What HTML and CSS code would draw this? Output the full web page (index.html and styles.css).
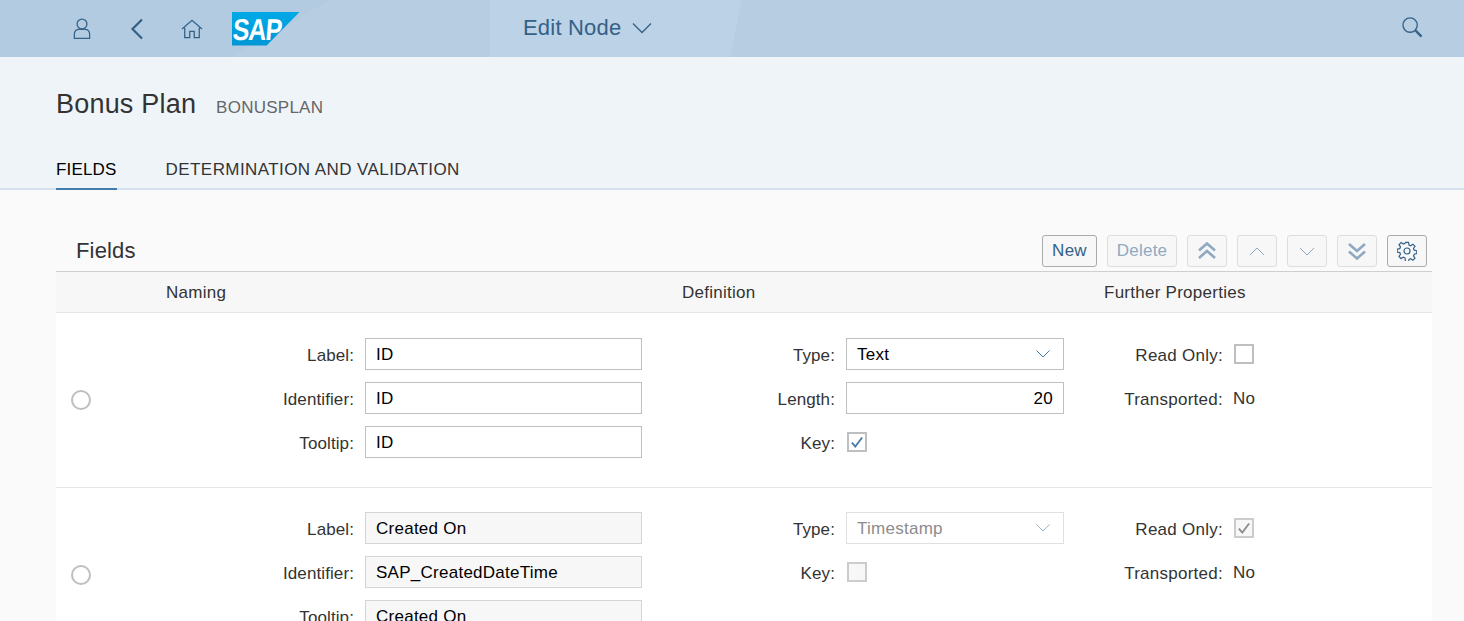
FILE: index.html
```html
<!DOCTYPE html>
<html lang="en">
<head>
<meta charset="UTF-8">
<title>Edit Node</title>
<link rel="stylesheet" href="styles.css">
</head>

<body>
    <header class="shell-bar">
        <div class="shell-left">
            <svg class="shell-icon" viewBox="0 0 20 24"><circle cx="10" cy="6.500" r="5.500"/><path d="M1.500 22.500v-4.500c0-3.500 2.500-5.500 5.500-5.500h6c3 0 5.500 2 5.500 5.500v4.500z"/></svg>
            <svg class="shell-icon back" viewBox="0 0 14 22"><path d="M12 1.500 2.500 11 12 20.500"/></svg>
            <svg class="shell-icon home" viewBox="0 0 24 22"><path d="M1 11 12 1.500 23 11M4 9.500v11h5.500v-7h5v7H20v-11"/></svg>
            <div class="logo"><span>SAP</span></div>
        </div>
        <div class="shell-title">
            <span>Edit Node</span>
            <svg class="title-arrow" viewBox="0 0 20 12"><path d="M1 1.500 10 10.500 19 1.500"/></svg>
        </div>
        <svg class="shell-icon search" viewBox="0 0 22 22"><circle cx="8.500" cy="8.500" r="7.500"/><path class="handle" d="M14 14l6.500 6.500"/></svg>
    </header>

    <section class="page-head">
        <div class="page-title">
            <h1>Bonus Plan</h1>
            <span class="page-id">BONUSPLAN</span>
        </div>
        <nav class="tabs">
            <a class="tab active">FIELDS</a>
            <a class="tab">DETERMINATION AND VALIDATION</a>
        </nav>
    </section>

    <main class="content">
        <div class="toolbar">
            <h2>Fields</h2>
            <div class="actions">
                <button class="btn new">New</button>
                <button class="btn off delete">Delete</button>
                <button class="btn off icon"><svg class="double" viewBox="0 0 20 18"><path d="M2 8.500 10 1.500 18 8.500M2 16 10 9 18 16"/></svg></button>
                <button class="btn off icon"><svg class="single" viewBox="0 0 16 9"><path d="M1 8 8 1 15 8"/></svg></button>
                <button class="btn off icon"><svg class="single" viewBox="0 0 16 9"><path d="M1 1 8 8 15 1"/></svg></button>
                <button class="btn off icon"><svg class="double" viewBox="0 0 20 18"><path d="M2 2 10 9 18 2M2 9.500 10 16.500 18 9.500"/></svg></button>
                <button class="btn icon"><svg class="gear" viewBox="0 0 20 20"><circle cx="10" cy="10" r="3"/><path d="M8.500 1h3l.5 2.600 1.700.7 2.200-1.500 2.100 2.100-1.500 2.200.7 1.700 2.600.5v3l-2.600.5-.7 1.700 1.500 2.200-2.100 2.100-2.200-1.500-1.700.7-.5 2.600h-3L8 16.400l-1.700-.7-2.200 1.500L2 15.100l1.500-2.200-.7-1.700L.2 10.700v-3l2.600-.5.700-1.700L2 3.300 4.100 1.200l2.200 1.500L8 2z" transform="translate(0 .4)"/></svg></button>
            </div>
        </div>

        <div class="table">
            <div class="row head">
                <span></span>
                <span>Naming</span>
                <span>Definition</span>
                <span>Further Properties</span>
            </div>

            <div class="row item first">
                <div class="select-cell"><span class="radio"></span></div>
                <div class="col naming">
                    <label class="field"><span>Label:</span><div class="input">ID</div></label>
                    <label class="field"><span>Identifier:</span><div class="input">ID</div></label>
                    <label class="field"><span>Tooltip:</span><div class="input">ID</div></label>
                </div>
                <div class="col definition">
                    <label class="field"><span>Type:</span><div class="input drop">Text<svg viewBox="0 0 14 8"><path d="M.5.500 7 7 13.500.500"/></svg></div></label>
                    <label class="field"><span>Length:</span><div class="input num">20</div></label>
                    <label class="field"><span>Key:</span><div class="check key"><svg viewBox="0 0 14 14"><path d="M2.500 7.500 5.500 11 11.500 3"/></svg></div></label>
                </div>
                <div class="col further">
                    <label class="field"><span>Read Only:</span><div class="check"></div></label>
                    <label class="field"><span>Transported:</span><div class="value">No</div></label>
                </div>
            </div>

            <div class="row item">
                <div class="select-cell"><span class="radio"></span></div>
                <div class="col naming">
                    <label class="field"><span>Label:</span><div class="input ro">Created On</div></label>
                    <label class="field"><span>Identifier:</span><div class="input ro">SAP_CreatedDateTime</div></label>
                    <label class="field"><span>Tooltip:</span><div class="input ro">Created On</div></label>
                </div>
                <div class="col definition">
                    <label class="field"><span>Type:</span><div class="input drop dis">Timestamp<svg viewBox="0 0 14 8"><path d="M.5.500 7 7 13.500.500"/></svg></div></label>
                    <label class="field"><span>Key:</span><div class="check key ro"></div></label>
                </div>
                <div class="col further">
                    <label class="field"><span>Read Only:</span><div class="check ro"><svg viewBox="0 0 14 14"><path d="M2.500 7.500 5.500 11 11.500 3"/></svg></div></label>
                    <label class="field"><span>Transported:</span><div class="value">No</div></label>
                </div>
            </div>
        </div>
    </main>
</body>

</html>
```

FILE: styles.css
```css
html, body {
    margin: 0;
    padding: 0;
    height: 100%;
    overflow: hidden;
    background-color: #fafafa;
    font-family: "Liberation Sans", Arial, sans-serif;
    color: #333;
}

/* top bar */
.shell-bar {
    height: 57px;
    display: flex;
    align-items: center;
    position: relative;
    background-color: #b7cde2;
    background-image: linear-gradient(#bcd2e6, #bcd2e6);
    background-size: 240px 100%;
    background-position: 490px 0;
    background-repeat: no-repeat;
}
.shell-bar::before {
    content: "";
    position: absolute;
    left: 0;
    top: 0;
    width: 330px;
    height: 100%;
    background-color: #b2cbe1;
    clip-path: polygon(0 0, 100% 0, 70% 100%, 0 100%);
}
.shell-bar::after {
    content: "";
    position: absolute;
    left: 730px;
    top: 0;
    width: 12px;
    height: 100%;
    background-color: #bcd2e6;
    clip-path: polygon(0 100%, 100% 0, 0 0);
}
.shell-left {
    display: flex;
    align-items: center;
    padding-left: 73px;
    position: relative;
    z-index: 1;
}
.shell-icon {
    fill: none;
    stroke: #346187;
    stroke-width: 1.400;
    display: block;
}
.shell-left .shell-icon {
    width: 18px;
    height: 22px;
}
.shell-left .back {
    width: 14px;
    height: 22px;
    margin-left: 39px;
    stroke-width: 2.200;
}
.shell-left .home {
    width: 22px;
    height: 20px;
    margin-left: 37px;
}
.logo {
    width: 68px;
    height: 34px;
    margin-left: 29px;
    background: linear-gradient(#00a9e6, #0096d6);
    clip-path: polygon(0 0, 100% 0, 51% 100%, 0 100%);
    overflow: hidden;
}
.logo span {
    display: block;
    padding-left: 1px;
    font-size: 25px;
    line-height: 35px;
    font-weight: bold;
    color: #fff;
    letter-spacing: -1px;
    transform-origin: 0 50%;
    transform: scale(1, 1.2) skewX(-6deg);
}
.shell-title {
    position: absolute;
    left: 523px;
    top: 0;
    height: 55px;
    display: flex;
    align-items: center;
    gap: 11px;
    font-size: 22px;
    letter-spacing: .2px;
    color: #346187;
    z-index: 1;
}
.title-arrow {
    width: 20px;
    height: 12px;
    fill: none;
    stroke: #346187;
    stroke-width: 1.300;
}
.search {
    position: absolute;
    left: 1402px;
    top: 17px;
    width: 21px;
    height: 21px;
    z-index: 1;
}
.search .handle {
    stroke-width: 2.400;
}

/* object header */
.page-head {
    height: 131px;
    background-color: #eff4f9;
    border-bottom: 2px solid #d5e2ee;
    display: flex;
    flex-direction: column;
    justify-content: space-between;
    padding: 0 56px;
}
.page-title {
    display: flex;
    align-items: baseline;
    gap: 20px;
    padding-top: 32px;
}
h1 {
    margin: 0;
    font-size: 27px;
    font-weight: normal;
    letter-spacing: .2px;
    color: #333;
}
.page-id {
    font-size: 17px;
    letter-spacing: .25px;
    color: #666;
}
.tabs {
    display: flex;
    gap: 49px;
}
.tab {
    font-size: 17px;
    letter-spacing: .42px;
    color: #333;
    padding-bottom: 7px;
    height: 22px;
    line-height: 22px;
}
.tab.active {
    letter-spacing: .18px;
    color: #000;
    border-bottom: 2px solid #427cac;
    margin-bottom: -2px;
}

/* table */
.content {
    padding: 45px 32px 0 56px;
}
.toolbar {
    height: 36px;
    display: flex;
    justify-content: space-between;
    align-items: flex-start;
    padding: 0 5px 0 20px;
    border-bottom: 1px solid #cfcfcf;
}
h2 {
    margin: 0;
    font-size: 22px;
    line-height: 32px;
    font-weight: normal;
    letter-spacing: .15px;
    color: #333;
}
.actions {
    display: flex;
    gap: 10px;
}
.btn {
    height: 32px;
    padding: 0;
    background: #f7f7f7;
    border: 1px solid #ababab;
    border-radius: 3px;
    font-family: inherit;
    font-size: 17px;
    letter-spacing: .25px;
    color: #346187;
    display: flex;
    align-items: center;
    justify-content: center;
}
.btn.new { width: 55px; }
.btn.delete { width: 70px; }
.btn.off {
    border-color: #dddddd;
    color: #8fa9c2;
}
.btn.icon {
    width: 40px;
}
.btn svg {
    fill: none;
    stroke: #8fa9c2;
}
.btn .double {
    width: 20px;
    height: 18px;
    stroke-width: 2.600;
}
.btn .single {
    width: 16px;
    height: 9px;
    stroke-width: 1;
}
.btn .gear {
    width: 20px;
    height: 20px;
    stroke: #346187;
    stroke-width: 1.200;
}

.row {
    display: grid;
    grid-template-columns: 110px 516px 422px 328px;
}
.row.head {
    height: 38px;
    padding-top: 2px;
    align-items: center;
    background-color: #f7f7f7;
    border-bottom: 1px solid #e5e5e5;
    font-size: 17px;
    letter-spacing: .26px;
}
.row.item {
    background-color: #fff;
    height: 175px;
    padding-top: 24px;
    box-sizing: border-box;
    border-bottom: 1px solid #e5e5e5;
}
.row.item.first {
    padding-top: 25px;
}
.select-cell {
    padding-left: 15px;
    padding-top: 53px;
}
.first .select-cell {
    padding-top: 52px;
}
.radio {
    display: block;
    width: 16px;
    height: 16px;
    border: 2px solid #bfbfbf;
    border-radius: 50%;
    background: #fff;
}
.col {
    display: flex;
    flex-direction: column;
    gap: 12px;
}
.field {
    display: flex;
    align-items: center;
    height: 32px;
    gap: 11px;
    font-size: 17px;
    letter-spacing: .26px;
    color: #333;
}
.field > span {
    text-align: right;
    padding-top: 4px;
}
.naming .field > span { width: 188px; letter-spacing: .1px; }
.definition .field > span { width: 153px; letter-spacing: .1px; }
.further .field > span { width: 119px; }

.input {
    box-sizing: border-box;
    height: 32px;
    padding: 0 10px;
    background: #fff;
    border: 1px solid #bfbfbf;
    font-size: 17px;
    line-height: 31px;
    color: #000;
}
.naming .input { width: 277px; }
.definition .input { width: 218px; }
.input.num { text-align: right; }
.input.drop {
    display: flex;
    align-items: center;
    justify-content: space-between;
    padding-right: 13px;
}
.input.drop svg {
    width: 14px;
    height: 8px;
    fill: none;
    stroke: #427cac;
    stroke-width: 1;
}
.input.ro {
    background: #f7f7f7;
    border-color: #d5d5d5;
}
.input.dis {
    border-color: #e0e0e0;
    color: #8c8c8c;
}
.input.dis svg { stroke: #9cb3c8; }

.check {
    box-sizing: border-box;
    width: 20px;
    height: 20px;
    background: #fff;
    border: 2px solid #bfbfbf;
}
.check.key {
    margin-left: 1px;
}
.check svg {
    display: block;
    width: 16px;
    height: 16px;
    fill: none;
    stroke: #427cac;
    stroke-width: 1.600;
}
.check.ro {
    background: #f7f7f7;
    border-color: #cccccc;
}
.check.ro svg { stroke: #8c8c8c; }
.value {
    color: #333;
    padding-top: 2px;
    margin-left: -1px;
}
```
